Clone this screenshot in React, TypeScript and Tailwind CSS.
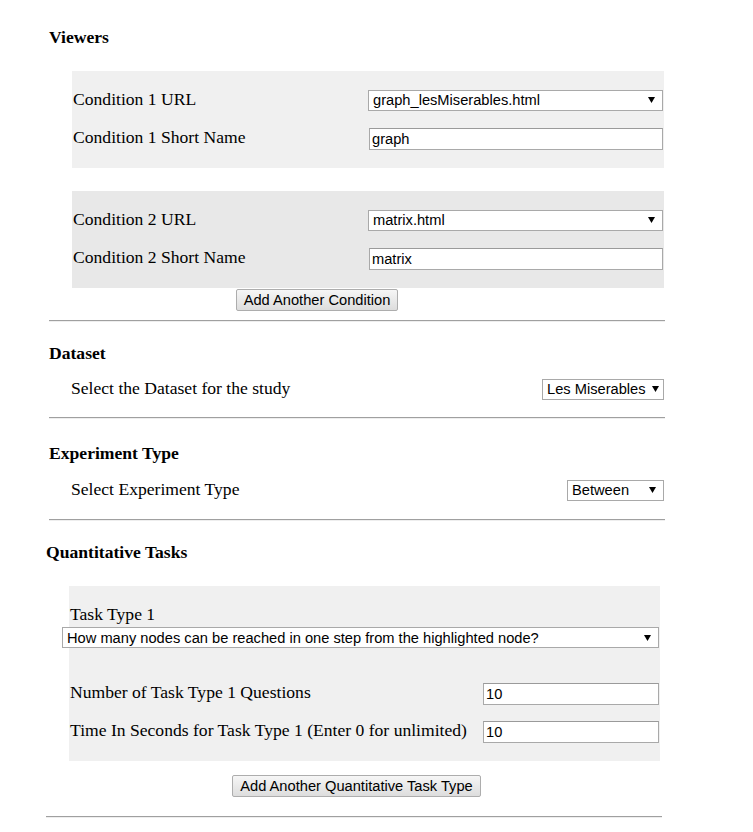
const serif = "font-['Liberation_Serif','Times_New_Roman',serif]";
const sans = "font-['Liberation_Sans',Arial,sans-serif]";

function Arrow() {
  return (
    <svg width="7" height="6" viewBox="0 0 7 6" className="shrink-0">
      <path d="M0 0H7L3.5 6Z" fill="#000" />
    </svg>
  );
}

function FakeSelect({ value, className }: { value: string; className: string }) {
  return (
    <div
      className={`flex h-[21px] items-center justify-between gap-[6px] border border-[#a9a9a9] bg-white pl-[4px] pr-[7px] text-[14.67px] leading-[18px] text-black ${sans} ${className}`}
    >
      <span className="whitespace-nowrap">{value}</span>
      <Arrow />
    </div>
  );
}

function TextInput({ value, className }: { value: string; className: string }) {
  return (
    <div
      className={`flex h-[22px] items-center border border-[#a9a9a9] border-t-[#9a9a9a] bg-white px-[2px] text-[14.67px] leading-[18px] text-black ${sans} ${className}`}
    >
      {value}
    </div>
  );
}

function Button({ label, className }: { label: string; className: string }) {
  return (
    <button
      type="button"
      className={`flex h-[22px] items-center justify-center rounded-[2px] border border-[#adadad] bg-gradient-to-b from-[#f6f6f6] to-[#dddddd] text-[14.67px] leading-none text-black ${sans} ${className}`}
    >
      {label}
    </button>
  );
}

function Rule() {
  return <div className="h-[2px] w-[616px] border-t border-b border-t-[#a0a0a0] border-b-[#eeeeee]" />;
}

function Heading({ text, className = "" }: { text: string; className?: string }) {
  return <h3 className={`h-[20px] text-[17.6px] font-bold leading-[20px] text-black ${className}`}>{text}</h3>;
}

function ConditionPanel({ n, url, short, bg, className = "" }: { n: number; url: string; short: string; bg: string; className?: string }) {
  return (
    <div className={`ml-[23px] w-[592px] pb-[11px] pt-[10px] ${bg} ${className}`}>
      <div className="flex h-[38px] items-center justify-between pl-[1px] pr-[1px]">
        <span className="text-[17.6px] leading-none">Condition {n} URL</span>
        <FakeSelect value={url} className="w-[295px]" />
      </div>
      <div className="flex h-[38px] items-center justify-between pl-[1px] pr-[1px]">
        <span className="text-[17.6px] leading-none">Condition {n} Short Name</span>
        <TextInput value={short} className="mt-[2px] w-[294px]" />
      </div>
    </div>
  );
}

export default function App() {
  return (
    <div className={`min-h-[832px] w-[753px] bg-white pt-[27px] text-black ${serif}`}>
      <div className="ml-[49px] w-[616px]">
        <Heading text="Viewers" />
        <ConditionPanel n={1} url="graph_lesMiserables.html" short="graph" bg="bg-[#f0f0f0]" className="mt-[24px]" />
        <ConditionPanel n={2} url="matrix.html" short="matrix" bg="bg-[#e8e8e8]" className="mt-[23px]" />
        <Button label="Add Another Condition" className="ml-[187px] mt-[1px] w-[162px]" />
        <div className="mt-[9px]">
          <Rule />
        </div>

        <Heading text="Dataset" className="mt-[21px]" />
        <div className="mt-[7px] flex h-[38px] items-center justify-between pl-[22px] pr-[1px]">
          <span className="text-[17.6px] leading-none">Select the Dataset for the study</span>
          <FakeSelect value="Les Miserables" className="w-[122px]" />
        </div>
        <div className="mt-[9px]">
          <Rule />
        </div>

        <Heading text="Experiment Type" className="mt-[24px]" />
        <div className="mt-[8px] flex h-[38px] items-center justify-between pl-[22px] pr-[1px]">
          <span className="text-[17.6px] leading-none">Select Experiment Type</span>
          <FakeSelect value="Between" className="w-[97px]" />
        </div>
        <div className="mt-[10px]">
          <Rule />
        </div>
      </div>

      <div className="ml-[46px] w-[616px]">
        <Heading text="Quantitative Tasks" className="mt-[21px]" />
        <div className="ml-[23px] mt-[24px] w-[591px] bg-[#f0f0f0] pb-[11px] pt-[18px]">
          <div className="h-[20px] pl-[1px] text-[17.6px] leading-[20px]">Task Type 1</div>
          <FakeSelect
            value="How many nodes can be reached in one step from the highlighted node?"
            className="ml-[-7px] mt-[3px] w-[597px]"
          />
          <div className="mt-[26px] flex h-[38px] items-center justify-between pl-[1px] pr-[1px]">
            <span className="text-[17.6px] leading-none">Number of Task Type 1 Questions</span>
            <TextInput value="10" className="mt-[1px] w-[176px]" />
          </div>
          <div className="flex h-[38px] items-center justify-between pl-[1px] pr-[1px]">
            <span className="text-[17.6px] leading-none">Time In Seconds for Task Type 1 (Enter 0 for unlimited)</span>
            <TextInput value="10" className="mt-[1px] w-[176px]" />
          </div>
        </div>
        <Button label="Add Another Quantitative Task Type" className="ml-[186px] mt-[14px] w-[249px]" />
        <div className="mt-[19px]">
          <Rule />
        </div>
      </div>
    </div>
  );
}
